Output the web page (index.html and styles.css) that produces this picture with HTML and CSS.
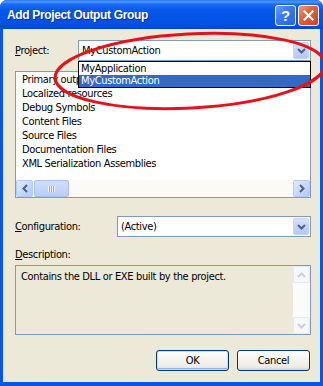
FILE: index.html
```html
<!DOCTYPE html>
<html>
<head>
<meta charset="utf-8">
<link rel="stylesheet" href="styles.css">
</head>
<body>
<div class="window">
  <div class="titlebar">
    <span class="title">Add Project Output Group</span>
    <div class="caption-buttons">
      <span class="cbtn help">?</span>
      <span class="cbtn close">
        <svg width="11" height="11" viewBox="0 0 11 11"><path d="M1.5 1.5 L9.5 9.5 M9.5 1.5 L1.5 9.5" stroke="#fff" stroke-width="2.2" stroke-linecap="square"/></svg>
      </span>
    </div>
  </div>
  <div class="client">
    <div class="row project-row">
      <span class="label"><u>P</u>roject:</span>
      <div class="combo">
        <span class="combo-text">MyCustomAction</span>
        <span class="combo-btn"><svg width="9" height="6" viewBox="0 0 9 6"><path d="M1 1 L4.5 4.5 L8 1" fill="none" stroke="#4D6185" stroke-width="2"/></svg></span>
        <ul class="dropdown">
          <li>MyApplication</li>
          <li class="selected">MyCustomAction</li>
        </ul>
      </div>
    </div>
    <div class="listbox">
      <ul class="items">
        <li>Primary output</li>
        <li>Localized resources</li>
        <li>Debug Symbols</li>
        <li>Content Files</li>
        <li>Source Files</li>
        <li>Documentation Files</li>
        <li>XML Serialization Assemblies</li>
      </ul>
      <div class="hscroll">
        <span class="sb-btn"><svg width="6" height="9" viewBox="0 0 6 9"><path d="M5 1 L1.5 4.5 L5 8" fill="none" stroke="#4D6185" stroke-width="2"/></svg></span>
        <span class="sb-thumb"><span class="grip"></span></span>
        <span class="sb-track"></span>
        <span class="sb-btn"><svg width="6" height="9" viewBox="0 0 6 9"><path d="M1 1 L4.5 4.5 L1 8" fill="none" stroke="#4D6185" stroke-width="2"/></svg></span>
      </div>
    </div>
    <div class="row config-row">
      <span class="label"><u>C</u>onfiguration:</span>
      <div class="combo">
        <span class="combo-text">(Active)</span>
        <span class="combo-btn"><svg width="9" height="6" viewBox="0 0 9 6"><path d="M1 1 L4.5 4.5 L8 1" fill="none" stroke="#4D6185" stroke-width="2"/></svg></span>
      </div>
    </div>
    <div class="desc-label"><u>D</u>escription:</div>
    <div class="descbox">
      <p class="desc-text">Contains the DLL or EXE built by the project.</p>
      <div class="vscroll">
        <span class="sb-btn disabled"><svg width="9" height="6" viewBox="0 0 9 6"><path d="M1 5 L4.5 1.5 L8 5" fill="none" stroke="#C9D0DC" stroke-width="2"/></svg></span>
        <span class="vs-track"></span>
        <span class="sb-btn disabled"><svg width="9" height="6" viewBox="0 0 9 6"><path d="M1 1 L4.5 4.5 L8 1" fill="none" stroke="#C9D0DC" stroke-width="2"/></svg></span>
      </div>
    </div>
    <div class="buttons">
      <button class="btn default">OK</button>
      <button class="btn">Cancel</button>
    </div>
  </div>
  <svg class="annotation" width="323" height="386" viewBox="0 0 323 386">
    <ellipse cx="190" cy="71" rx="135" ry="37" transform="rotate(-3 190 71)" fill="none" stroke="#E5121B" stroke-width="3"/>
  </svg>
</div>
</body>
</html>
```

FILE: styles.css
```css
* { box-sizing: border-box; }
html, body { margin: 0; padding: 0; background: #fff; }
body { font-family: "DejaVu Sans Condensed", "DejaVu Sans", sans-serif; font-size: 11px; letter-spacing: -0.35px; color: #000; }

.window {
  position: relative;
  width: 323px;
  height: 386px;
  display: flex;
  flex-direction: column;
  background: #0A55E3;
  border-radius: 7px 7px 0 0;
  overflow: hidden;
}

.titlebar {
  height: 29px;
  flex: none;
  display: flex;
  align-items: center;
  justify-content: space-between;
  padding: 0 4px 0 7px;
  background: linear-gradient(to bottom, #2C78F5 0%, #4A98FC 7%, #1B6CF4 14%, #0758EB 35%, #0354E6 65%, #0550E0 85%, #0146D2 100%);
}
.title {
  color: #fff;
  font-family: "Liberation Sans", sans-serif;
  font-weight: bold;
  font-size: 12px;
  letter-spacing: -0.35px;
  text-shadow: 1px 1px 0 #0A2C8C;
  margin-top: 1px;
}
.caption-buttons { display: flex; gap: 2px; margin-top: 1px; }
.cbtn {
  width: 21px;
  height: 21px;
  border: 1px solid #fff;
  border-radius: 3px;
  display: flex;
  align-items: center;
  justify-content: center;
  color: #fff;
  letter-spacing: 0;
}
.help {
  background: linear-gradient(135deg, #6C9DFB 0%, #3F7AF3 40%, #2460E3 100%);
  font-family: "Liberation Sans", sans-serif;
  font-weight: bold;
  font-size: 15px;
}
.close {
  background: linear-gradient(135deg, #F19778 0%, #E5613E 40%, #CC4220 100%);
}

.client {
  flex: 1;
  background: #ECE9D8;
  margin: 0 3px 4px 3px;
  padding: 11px 9px 0 12px;
  display: flex;
  flex-direction: column;
}

.row { display: grid; align-items: center; height: 21px; }
.project-row { grid-template-columns: 63px 1fr; }
.config-row { grid-template-columns: 102px 1fr; margin-top: 18px; }

.combo {
  position: relative;
  height: 21px;
  border: 1px solid #7F9DB9;
  background: #fff;
  display: flex;
  align-items: stretch;
}
.combo-text { flex: 1; padding-left: 3px; line-height: 19px; }
.combo-btn {
  width: 16px;
  margin: 1px;
  border-radius: 2px;
  background: linear-gradient(to bottom, #D8E4FD 0%, #C3D4FB 50%, #B3C8F6 100%);
  border: 1px solid #C3D3FD;
  display: flex;
  align-items: center;
  justify-content: center;
}

.dropdown {
  position: absolute;
  top: 20px;
  left: -1px;
  right: -1px;
  margin: 0;
  padding: 0;
  list-style: none;
  background: #fff;
  border: 1px solid #000;
  z-index: 2;
}
.dropdown li { height: 12px; line-height: 12px; padding-left: 2px; }
.dropdown li:first-child { height: 13px; line-height: 13px; }
.dropdown li.selected { background: #316AC5; color: #fff; }

.listbox {
  margin-top: 10px;
  height: 127px;
  border: 1px solid #7F9DB9;
  background: #fff;
  display: flex;
  flex-direction: column;
}
.items {
  flex: 1;
  margin: 0;
  padding: 1px 0 0 0;
  list-style: none;
}
.items li { height: 14px; line-height: 14px; padding-left: 6px; white-space: nowrap; }

.hscroll {
  height: 17px;
  display: flex;
  background: #FBFAF6;
}
.sb-btn {
  width: 17px;
  flex: none;
  height: 17px;
  border-radius: 2px;
  border: 1px solid #B7C9F5;
  background: linear-gradient(135deg, #E3EBFE 0%, #C9D8FC 50%, #B4C8F6 100%);
  display: flex;
  align-items: center;
  justify-content: center;
}
.sb-thumb {
  width: 35px;
  margin-left: 1px;
  border-radius: 2px;
  border: 1px solid #A9BEF1;
  background: linear-gradient(to bottom, #D0DEFE 0%, #C4D5FC 50%, #B9CCF8 100%);
  display: flex;
  align-items: center;
  justify-content: center;
}
.grip {
  width: 7px;
  height: 6px;
  background: repeating-linear-gradient(to right, #EEF4FE 0 1px, #8CA6E6 1px 2px);
}
.sb-track { flex: 1; }

.desc-label { margin-top: 11px; height: 13px; line-height: 13px; }

.descbox {
  margin-top: 4px;
  height: 70px;
  border: 1px solid #7F9DB9;
  background: #ECE9D8;
  display: flex;
}
.desc-text { flex: 1; margin: 0; padding: 4px 0 0 5px; line-height: 13px; }
.vscroll {
  width: 17px;
  display: flex;
  flex-direction: column;
  background: #FBFBF8;
}
.sb-btn.disabled {
  background: #F6F8FD;
  border: 1px solid #E3E8F2;
}
.vs-track { flex: 1; }

.buttons {
  margin-top: 15px;
  display: flex;
  justify-content: flex-end;
  gap: 8px;
  padding-right: 1px;
}
.btn {
  width: 73px;
  height: 21px;
  border: 1px solid #003C74;
  border-radius: 3px;
  background: linear-gradient(to bottom, #FFFFFF 0%, #F4F3EE 50%, #ECEBE5 85%, #D6D0C5 100%);
  font: inherit;
  letter-spacing: inherit;
  color: #000;
  padding: 0;
}
.btn.default {
  box-shadow: inset 0 0 0 1px #C9DAFC, inset 0 -1px 0 1px #98B4F0;
}

.annotation {
  position: absolute;
  left: 0;
  top: 0;
  pointer-events: none;
  z-index: 5;
}
```
